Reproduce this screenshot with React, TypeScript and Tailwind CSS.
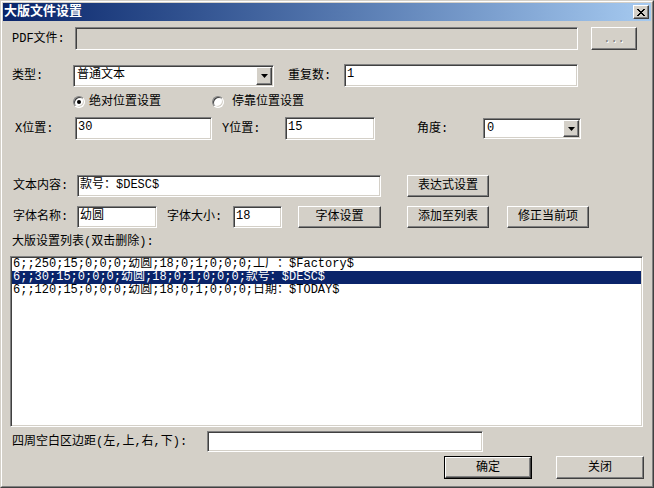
import React from "react";

const FONT = "font-['Liberation_Mono','Noto_Sans_CJK_SC',monospace]";
const SUNKEN =
  "border border-t-[#808080] border-l-[#808080] border-r-white border-b-white shadow-[inset_1px_1px_0_#404040,inset_-1px_-1px_0_#d4d0c8]";
const RAISED =
  "border border-t-white border-l-white border-r-[#404040] border-b-[#404040] shadow-[inset_-1px_-1px_0_#808080]";

const LIST_ROWS = [
  "6;;250;15;0;0;0;幼圆;18;0;1;0;0;0;工厂：$Factory$",
  "6;;30;15;0;0;0;幼圆;18;0;1;0;0;0;款号：$DESC$",
  "6;;120;15;0;0;0;幼圆;18;0;1;0;0;0;日期：$TODAY$",
];

function Edit({ className, value = "", disabled = false }: { className: string; value?: string; disabled?: boolean }) {
  return (
    <div
      className={`${SUNKEN} ${className} ${disabled ? "bg-[#d4d0c8]" : "bg-white"} px-[2px] text-[12px] leading-[18px] text-black whitespace-nowrap overflow-hidden`}
    >
      {value}
    </div>
  );
}

function Button({ className, label, disabled = false }: { className: string; label: string; disabled?: boolean }) {
  return (
    <div
      className={`${RAISED} ${className} flex items-center justify-center bg-[#d4d0c8] text-[12px] ${
        disabled ? "text-[#808080] [text-shadow:1px_1px_0_#fff]" : "text-black"
      }`}
    >
      {label}
    </div>
  );
}

function Combo({ className, value }: { className: string; value: string }) {
  return (
    <div className={`${SUNKEN} ${className} flex bg-white p-[1px]`}>
      <div className="flex-1 pl-[2px] text-[12px] leading-[17px]">{value}</div>
      <div className={`${RAISED} flex h-full w-[16px] items-center justify-center bg-[#d4d0c8]`}>
        <svg width="7" height="4" viewBox="0 0 7 4">
          <path d="M0 0h7L3.5 4z" fill="#000" />
        </svg>
      </div>
    </div>
  );
}

function Radio({ checked }: { checked: boolean }) {
  return (
    <div className="flex h-[12px] w-[12px] items-center justify-center rounded-full border border-t-[#808080] border-l-[#808080] border-r-white border-b-white bg-white shadow-[inset_1px_1px_0_#404040,inset_-1px_-1px_0_#d4d0c8]">
      {checked && <div className="h-[4px] w-[4px] rounded-full bg-black" />}
    </div>
  );
}

function Label({ className, text }: { className: string; text: string }) {
  return <div className={`${className} shrink-0 text-[12px] whitespace-nowrap text-black`}>{text}</div>;
}

export default function App() {
  return (
    <div className={`${FONT} h-[488px] w-[654px] overflow-hidden border border-t-[#d4d0c8] border-l-[#d4d0c8] border-r-[#404040] border-b-[#404040] bg-[#d4d0c8]`}>
      <div className="h-full w-full border border-t-white border-l-white border-r-[#808080] border-b-[#808080]">
        {/* title bar */}
        <div className="m-[1px] flex h-[18px] items-center bg-gradient-to-r from-[#0a246a] to-[#a6caf0] pl-[1px]">
          <div className="flex-1 text-[13px] leading-[18px] font-bold text-white">大版文件设置</div>
          <div className={`${RAISED} mr-[2px] flex h-[14px] w-[16px] items-center justify-center bg-[#d4d0c8]`}>
            <svg width="8" height="7" viewBox="0 0 8 7" shapeRendering="crispEdges">
              <path d="M0 0h2v1h1v1h2V1h1V0h2v1H7v1H6v1H5v1h1v1h1v1h1v1H6V6H5V5H3v1H2v1H0V6h1V5h1V4h1V3H2V2H1V1H0z" fill="#000" />
            </svg>
          </div>
        </div>

        {/* PDF file */}
        <div className="mt-[6px] flex h-[23px] items-center">
          <Label className="ml-[10px] w-[63px]" text="PDF文件:" />
          <Edit className="h-[23px] w-[503px]" disabled />
          <Button className="ml-[13px] h-[23px] w-[46px]" label="..." disabled />
        </div>

        {/* type / repeat */}
        <div className="mt-[14px] flex h-[23px] items-center">
          <Label className="ml-[10px] w-[61px]" text="类型:" />
          <Combo className="h-[22px] w-[201px]" value="普通文本" />
          <Label className="ml-[14px] w-[56px]" text="重复数:" />
          <Edit className="h-[23px] w-[234px]" value="1" />
        </div>

        {/* radios */}
        <div className="mt-[8px] flex h-[14px] items-center">
          <div className="ml-[71px] flex w-[139px] items-center">
            <Radio checked />
            <span className="ml-[4px] text-[12px]">绝对位置设置</span>
          </div>
          <div className="flex items-center">
            <Radio checked={false} />
            <span className="ml-[8px] text-[12px]">停靠位置设置</span>
          </div>
        </div>

        {/* positions */}
        <div className="mt-[8px] flex h-[23px] items-center">
          <Label className="ml-[13px] w-[60px]" text="X位置:" />
          <Edit className="h-[23px] w-[137px]" value="30" />
          <Label className="ml-[10px] w-[63px]" text="Y位置:" />
          <Edit className="h-[23px] w-[90px]" value="15" />
          <Label className="ml-[42px] w-[66px]" text="角度:" />
          <Combo className="h-[21px] w-[98px]" value="0" />
        </div>

        {/* text content */}
        <div className="mt-[35px] flex h-[22px] items-center">
          <Label className="ml-[11px] w-[64px]" text="文本内容:" />
          <Edit className="h-[22px] w-[304px]" value="款号：$DESC$" />
          <Button className="ml-[26px] h-[22px] w-[82px]" label="表达式设置" />
        </div>

        {/* font */}
        <div className="mt-[9px] flex h-[22px] items-center">
          <Label className="ml-[11px] w-[64px]" text="字体名称:" />
          <Edit className="h-[22px] w-[80px]" value="幼圆" />
          <Label className="ml-[10px] w-[66px]" text="字体大小:" />
          <Edit className="h-[22px] w-[49px]" value="18" />
          <Button className="ml-[16px] h-[22px] w-[83px]" label="字体设置" />
          <Button className="ml-[26px] h-[22px] w-[82px]" label="添加至列表" />
          <Button className="ml-[18px] h-[22px] w-[82px]" label="修正当前项" />
        </div>

        {/* list */}
        <div className="mt-[7px] flex h-[14px] items-center">
          <Label className="ml-[10px]" text="大版设置列表(双击删除):" />
        </div>
        <div className={`${SUNKEN} mt-[7px] ml-[8px] h-[171px] w-[633px] bg-white p-[1px]`}>
          {LIST_ROWS.map((row, i) => (
            <div
              key={row}
              className={`h-[13px] overflow-hidden pl-[1px] text-[12px] leading-[12px] whitespace-nowrap ${
                i === 1 ? "bg-[#0a246a] text-white" : "text-black"
              }`}
            >
              {row}
            </div>
          ))}
        </div>

        {/* margins */}
        <div className="mt-[4px] flex h-[21px] items-center">
          <Label className="ml-[10px] w-[195px]" text="四周空白区边距(左,上,右,下):" />
          <Edit className="h-[21px] w-[276px]" />
        </div>

        {/* buttons */}
        <div className="mt-[4px] flex h-[23px] items-center">
          <div className="ml-[442px] h-[23px] w-[88px] border border-black">
            <Button className="h-full w-full" label="确定" />
          </div>
          <Button className="ml-[24px] h-[23px] w-[88px]" label="关闭" />
        </div>
      </div>
    </div>
  );
}
